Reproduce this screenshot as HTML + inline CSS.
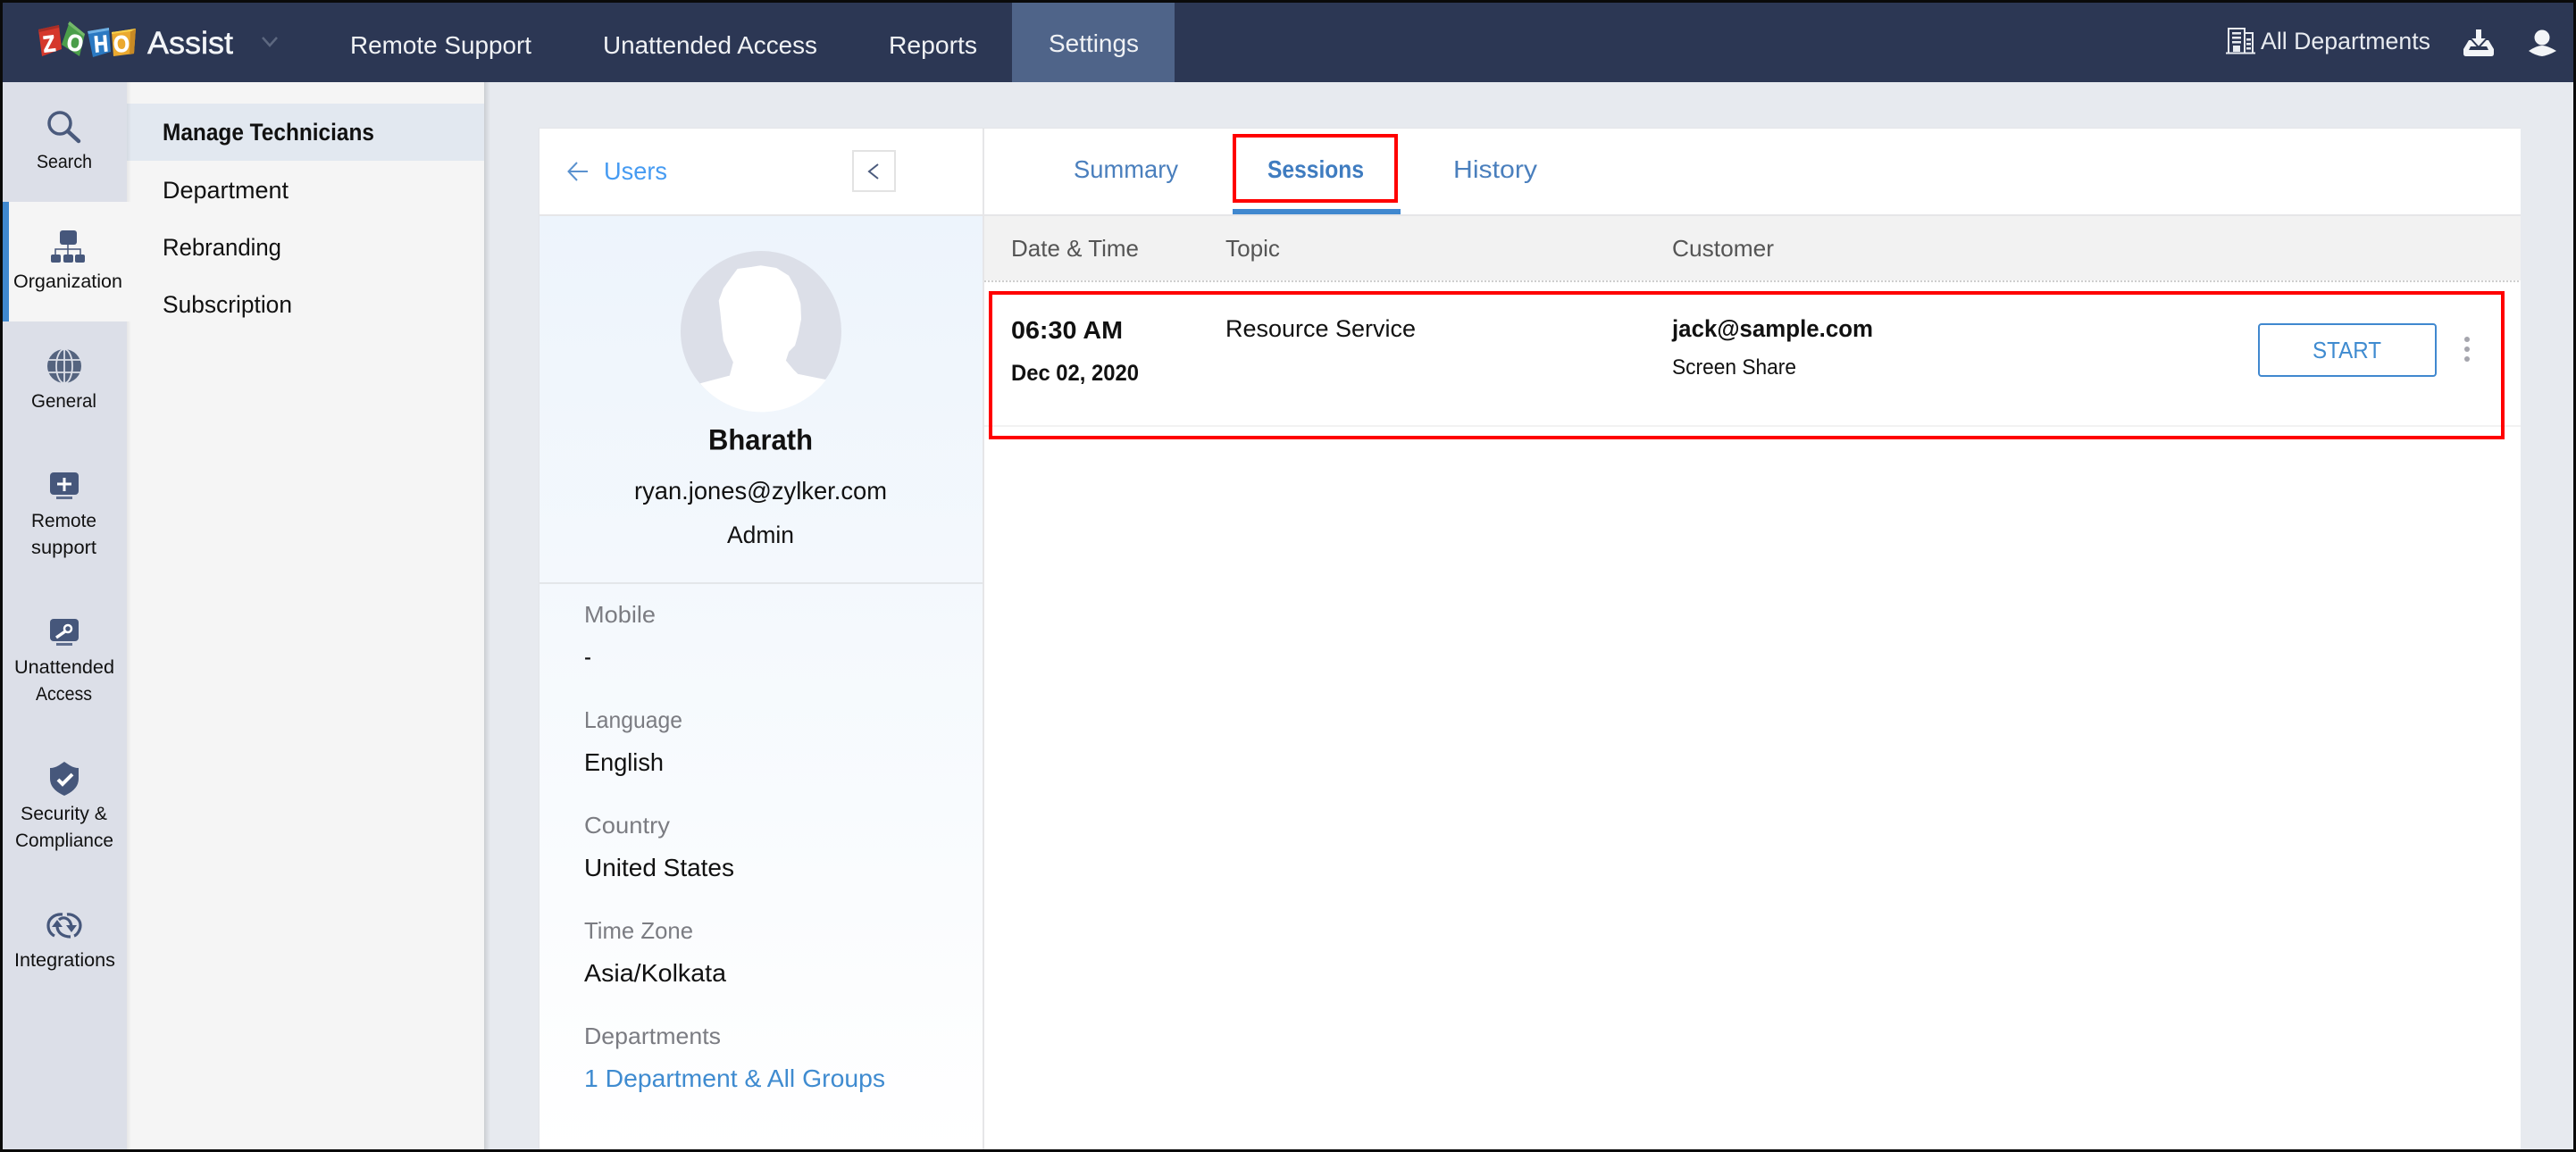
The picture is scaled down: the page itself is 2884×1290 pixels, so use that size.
<!DOCTYPE html>
<html lang="en"><head><meta charset="utf-8"><title>Zoho Assist - Sessions</title>
<style>html,body{margin:0;padding:0;background:#e7eaef;width:2884px;height:1290px;overflow:hidden}svg{display:block}text{font-family:"Liberation Sans",sans-serif;white-space:pre}</style></head><body>
<svg xmlns="http://www.w3.org/2000/svg" width="2884" height="1290" viewBox="0 0 2884 1290">
<defs>
<linearGradient id="lg" x1="0" y1="0" x2="0" y2="1"><stop offset="0" stop-color="#edf4fc"/><stop offset=".45" stop-color="#f5f9fd"/><stop offset="1" stop-color="#ffffff"/></linearGradient>
<linearGradient id="sh" x1="0" y1="0" x2="1" y2="0"><stop offset="0" stop-color="#000" stop-opacity=".12"/><stop offset="1" stop-color="#000" stop-opacity="0"/></linearGradient>
</defs>
<rect width="2884" height="1290" fill="#e7eaef"/>
<!-- header -->
<rect x="0" y="0" width="2884" height="92" fill="#2c3754"/>
<rect x="1133" y="3" width="182" height="89" fill="#4f6489"/>
<!-- logo -->
<polygon points="43,33 66,28 69,55 47,63" fill="#d5382c"/><polygon points="43,33 66,28 66,31 44,36" fill="#a82e26"/>
<polygon points="78,24 95,38 89,63 69,50" fill="#4b9e4a"/><polygon points="78,24 95,38 94,41 76,27" fill="#74b96a"/>
<polygon points="98,35 122,31 124,58 104,64" fill="#2b79c2"/><polygon points="98,35 122,31 122,34 99,38" fill="#6fb0e4"/>
<polygon points="125,36 152,32 150,60 127,63" fill="#eba92f"/><polygon points="146,34 152,32 150,60 145,61" fill="#c98a24"/><polygon points="125,36 152,32 147,35 125,38" fill="#f7cf4a"/>
<g font-size="26" font-weight="700" fill="#fff" stroke="#fff" stroke-width=".7">
<text x="48" y="58" textLength="14" lengthAdjust="spacingAndGlyphs" transform="rotate(-7 55 49)">Z</text>
<text x="75" y="57" textLength="18" lengthAdjust="spacingAndGlyphs" transform="rotate(10 84 48)">O</text>
<text x="105" y="58" textLength="16" lengthAdjust="spacingAndGlyphs" transform="rotate(-5 113 49)">H</text>
<text x="127" y="58" textLength="18" lengthAdjust="spacingAndGlyphs" transform="rotate(-3 136 49)">O</text>
</g>
<text x="165" y="60" font-size="35" fill="#f2f4f7" stroke="#f2f4f7" stroke-width=".5" textLength="96" lengthAdjust="spacingAndGlyphs">Assist</text>
<path d="M294 42 L302 51 L310 42" fill="none" stroke="#5d6880" stroke-width="2.5"/>
<g font-size="28" fill="#f0f2f5">
<text x="392" y="60" textLength="203" lengthAdjust="spacingAndGlyphs">Remote Support</text>
<text x="675" y="60" textLength="240" lengthAdjust="spacingAndGlyphs">Unattended Access</text>
<text x="995" y="60" textLength="99" lengthAdjust="spacingAndGlyphs">Reports</text>
<text x="1174" y="58" textLength="101" lengthAdjust="spacingAndGlyphs">Settings</text>
</g>
<text x="2531" y="55" font-size="27" fill="#e8ebf0" textLength="190" lengthAdjust="spacingAndGlyphs">All Departments</text>
<!-- building -->
<g fill="none" stroke="#e8ebf0" stroke-width="2">
<path d="M2495 59 V32 H2513 V59 M2513 37 H2522 V59 M2492 59.500 H2525"/>
</g>
<g fill="#e8ebf0">
<rect x="2499" y="36" width="10" height="2.500"/><rect x="2499" y="41" width="10" height="2.500"/><rect x="2499" y="46" width="10" height="2.500"/><rect x="2500" y="51" width="8" height="7"/>
<rect x="2515" y="43" width="5" height="2.500"/><rect x="2515" y="48" width="5" height="2.500"/><rect x="2515" y="53" width="5" height="2.500"/>
</g>
<!-- download -->
<path d="M2764 45 L2758 55 V60 Q2758 63 2761 63 H2789 Q2792 63 2792 60 V55 L2786 45 Z" fill="#f2f4f7"/>
<path d="M2766 52 L2764 56 H2786 L2784 52 Z" fill="#2c3754"/>
<path d="M2771 32 H2779 V42 H2785 L2775 53 L2765 42 H2771 Z" fill="#f2f4f7" stroke="#2c3754" stroke-width="2"/>
<!-- user -->
<circle cx="2846" cy="42" r="8.500" fill="#f2f4f7"/>
<path d="M2831 57 Q2840 51 2846 51 Q2852 51 2862 57 Q2853 62 2846 63 Q2838 62 2831 57 Z" fill="#f2f4f7"/>

<!-- left rail -->
<rect x="0" y="92" width="142" height="1198" fill="#dcdfe8"/>
<rect x="10" y="226" width="132" height="134" fill="#f5f5f5"/>
<rect x="3" y="226" width="7" height="134" fill="#3f88cf"/>
<!-- sub nav -->
<rect x="142" y="92" width="400" height="1198" fill="#f5f5f5"/>
<rect x="142" y="116" width="400" height="64" fill="#e2e8f0"/>
<rect x="142" y="92" width="5" height="134" fill="url(#sh)" opacity=".5"/>
<rect x="142" y="360" width="5" height="930" fill="url(#sh)" opacity=".5"/>
<rect x="542" y="92" width="7" height="1198" fill="url(#sh)"/>
<g font-size="27" fill="#111">
<text x="182" y="157" font-weight="700" font-size="26.500" textLength="237" lengthAdjust="spacingAndGlyphs">Manage Technicians</text>
<text x="182" y="222" textLength="141" lengthAdjust="spacingAndGlyphs">Department</text>
<text x="182" y="286" textLength="133" lengthAdjust="spacingAndGlyphs">Rebranding</text>
<text x="182" y="350" textLength="145" lengthAdjust="spacingAndGlyphs">Subscription</text>
</g>
<!-- rail icons -->
<g fill="none" stroke="#4a5a7c"><circle cx="67" cy="138" r="12" stroke-width="3.500"/><path d="M76 147 L88 158" stroke-width="4.500" stroke-linecap="round"/></g>
<g fill="#46577b">
<rect x="67" y="258" width="19" height="16" rx="3"/>
<rect x="57" y="285" width="11" height="9" rx="2"/><rect x="71" y="285" width="11" height="9" rx="2"/><rect x="84" y="285" width="11" height="9" rx="2"/>
<path d="M76 274 V285 M62 285 V279 H90 V285" fill="none" stroke="#46577b" stroke-width="1.500"/>
</g>
<!-- globe -->
<circle cx="72" cy="410" r="19" fill="#55647f"/>
<g fill="none" stroke="#dcdfe8" stroke-width="1.800"><path d="M53 403 H91 M53 417 H91 M72 391 V429"/><ellipse cx="72" cy="410" rx="9" ry="19"/></g>
<!-- remote -->
<rect x="56" y="529" width="32" height="25" rx="4" fill="#46577b"/><rect x="63" y="556" width="18" height="3" fill="#5f6e8e"/>
<path d="M72 535 V550 M64 542 H80" stroke="#fff" stroke-width="3"/>
<!-- key -->
<rect x="56" y="693" width="32" height="25" rx="4" fill="#46577b"/><rect x="63" y="720" width="18" height="3" fill="#5f6e8e"/>
<circle cx="76" cy="704" r="4" fill="none" stroke="#fff" stroke-width="2.500"/><path d="M73 707 L63 714" stroke="#fff" stroke-width="3.500" fill="none"/>
<!-- shield -->
<path d="M72 853 L78 857 Q83 860 88 860 V872 Q88 884 72 891 Q56 884 56 872 V860 Q61 860 66 857 Z" fill="#46577b"/>
<path d="M65 873 L70 878 L81 867" fill="none" stroke="#fff" stroke-width="4"/>
<!-- integrations -->
<g fill="none" stroke="#46577b" stroke-width="3.200">
<path d="M70 1024 C60 1023 54 1030 54 1036 C54 1042 57 1046 61 1048"/>
<path d="M75 1024 C82 1023 90 1029 90 1036 C90 1042 86 1047 83 1048"/>
<path d="M66 1030 C70 1026 78 1027 80 1037"/>
<path d="M64 1037 C64 1044 70 1049 79 1049"/>
</g>
<path d="M58 1038 L64 1030 L70 1038 Z M74 1036 L80 1044 L86 1036 Z" fill="#46577b"/>
<g font-size="21" fill="#111">
<text x="41" y="188" textLength="62" lengthAdjust="spacingAndGlyphs">Search</text>
<text x="15" y="322" textLength="122" lengthAdjust="spacingAndGlyphs">Organization</text>
<text x="35" y="456" textLength="73" lengthAdjust="spacingAndGlyphs">General</text>
<text x="35" y="590" textLength="73" lengthAdjust="spacingAndGlyphs">Remote</text>
<text x="35" y="620" textLength="73" lengthAdjust="spacingAndGlyphs">support</text>
<text x="16" y="754" textLength="112" lengthAdjust="spacingAndGlyphs">Unattended</text>
<text x="40" y="784" textLength="63" lengthAdjust="spacingAndGlyphs">Access</text>
<text x="23" y="918" textLength="97" lengthAdjust="spacingAndGlyphs">Security &amp;</text>
<text x="17" y="948" textLength="110" lengthAdjust="spacingAndGlyphs">Compliance</text>
<text x="16" y="1082" textLength="113" lengthAdjust="spacingAndGlyphs">Integrations</text>
</g>

<!-- panel -->
<rect x="603" y="143" width="2219" height="1147" fill="#e3e5e9"/>
<rect x="604" y="144" width="2218" height="1146" fill="#fff"/>
<rect x="604" y="242" width="496" height="1048" fill="url(#lg)"/>
<rect x="1100" y="144" width="2" height="1146" fill="#e6e6e8"/>
<rect x="604" y="240" width="2218" height="2" fill="#e6e6e8"/>
<rect x="604" y="652" width="496" height="2" fill="#e3e6ea"/>
<path d="M658 192 H637 M646 182 L636.500 192 L646 202" fill="none" stroke="#5b92cf" stroke-width="2"/>
<text x="676" y="201" font-size="28" fill="#469bf2" textLength="71" lengthAdjust="spacingAndGlyphs">Users</text>
<rect x="955" y="169" width="47" height="45" fill="#fff" stroke="#e3e3e3" stroke-width="2"/>
<path d="M983 184 L973 192 L983 200" fill="none" stroke="#4a5a7c" stroke-width="2"/>
<!-- avatar -->
<circle cx="852" cy="371" r="90" fill="#dcdfe8"/>
<g transform="translate(590 130) scale(.3444)">
<path d="M565 870 L610 858 L660 845 L672 800 L655 765 L640 730 L635 690 L630 640 L625 600 L640 560 L665 525 L685 498 L730 492 L760 487 L810 495 L850 520 L875 565 L888 610 L890 660 L880 710 L870 745 L850 765 L840 795 L865 825 L880 840 L930 850 L970 858 A262 264 0 0 1 565 870 Z" fill="#fff" stroke="#fff" stroke-width="3" stroke-linejoin="round"/>
</g>
<text x="793" y="503.500" font-size="32" font-weight="700" fill="#111" textLength="117" lengthAdjust="spacingAndGlyphs">Bharath</text>
<text x="710" y="559" font-size="28" fill="#111" textLength="283" lengthAdjust="spacingAndGlyphs">ryan.jones@zylker.com</text>
<text x="814" y="608" font-size="27" fill="#111" textLength="75" lengthAdjust="spacingAndGlyphs">Admin</text>
<g font-size="26" fill="#7b7c82">
<text x="654" y="697" textLength="80" lengthAdjust="spacingAndGlyphs">Mobile</text>
<text x="654" y="815" textLength="110" lengthAdjust="spacingAndGlyphs">Language</text>
<text x="654" y="933" textLength="96" lengthAdjust="spacingAndGlyphs">Country</text>
<text x="654" y="1051" textLength="122" lengthAdjust="spacingAndGlyphs">Time Zone</text>
<text x="654" y="1169" textLength="153" lengthAdjust="spacingAndGlyphs">Departments</text>
</g>
<g font-size="28" fill="#111">
<text x="654" y="745" textLength="8" lengthAdjust="spacingAndGlyphs">-</text>
<text x="654" y="863" textLength="89" lengthAdjust="spacingAndGlyphs">English</text>
<text x="654" y="981" textLength="168" lengthAdjust="spacingAndGlyphs">United States</text>
<text x="654" y="1099" textLength="159" lengthAdjust="spacingAndGlyphs">Asia/Kolkata</text>
</g>
<text x="654" y="1217" font-size="28" fill="#3f8bd0" textLength="337" lengthAdjust="spacingAndGlyphs">1 Department &amp; All Groups</text>

<!-- tabs -->
<g font-size="28" fill="#4a7fbd">
<text x="1202" y="199" textLength="117" lengthAdjust="spacingAndGlyphs">Summary</text>
<text x="1419" y="199" font-weight="700" fill="#3f7cc0" textLength="108" lengthAdjust="spacingAndGlyphs">Sessions</text>
<text x="1627" y="199" textLength="94" lengthAdjust="spacingAndGlyphs">History</text>
</g>
<rect x="1380" y="234" width="188" height="6" fill="#4088cf"/>
<rect x="1382" y="152" width="181" height="73" fill="none" stroke="#ff0000" stroke-width="4"/>
<!-- table -->
<rect x="1102" y="242" width="1720" height="72" fill="#f2f2f2"/>
<path d="M1102 315 H2822" stroke="#cfcfcf" stroke-width="2" stroke-dasharray="2 2"/>
<g font-size="26" fill="#555">
<text x="1132" y="287" textLength="143" lengthAdjust="spacingAndGlyphs">Date &amp; Time</text>
<text x="1372" y="287" textLength="61" lengthAdjust="spacingAndGlyphs">Topic</text>
<text x="1872" y="287" textLength="114" lengthAdjust="spacingAndGlyphs">Customer</text>
</g>
<rect x="1102" y="476" width="1720" height="2" fill="#f2f2f2"/>
<text x="1132" y="379" font-size="28" font-weight="700" fill="#111" textLength="125" lengthAdjust="spacingAndGlyphs">06:30 AM</text>
<text x="1132" y="426" font-size="25" font-weight="700" fill="#111" textLength="143" lengthAdjust="spacingAndGlyphs">Dec 02, 2020</text>
<text x="1372" y="377" font-size="27" fill="#111" textLength="213" lengthAdjust="spacingAndGlyphs">Resource Service</text>
<text x="1872" y="377" font-size="27" font-weight="700" fill="#111" textLength="225" lengthAdjust="spacingAndGlyphs">jack@sample.com</text>
<text x="1872" y="419" font-size="24" fill="#111" textLength="139" lengthAdjust="spacingAndGlyphs">Screen Share</text>
<rect x="2529" y="363" width="198" height="58" rx="3" fill="#fff" stroke="#4088cf" stroke-width="2"/>
<text x="2589" y="401" font-size="26" fill="#3f8bd0" textLength="77" lengthAdjust="spacingAndGlyphs">START</text>
<g fill="#a5a5ad"><circle cx="2762" cy="380" r="3"/><circle cx="2762" cy="391" r="3"/><circle cx="2762" cy="402" r="3"/></g>
<rect x="1109" y="328" width="1693" height="162" fill="none" stroke="#ff0000" stroke-width="4"/>
<!-- outer frame -->
<rect x="1.500" y="1.500" width="2881" height="1287" fill="none" stroke="#0a0a0a" stroke-width="3"/>
</svg>
</body></html>
